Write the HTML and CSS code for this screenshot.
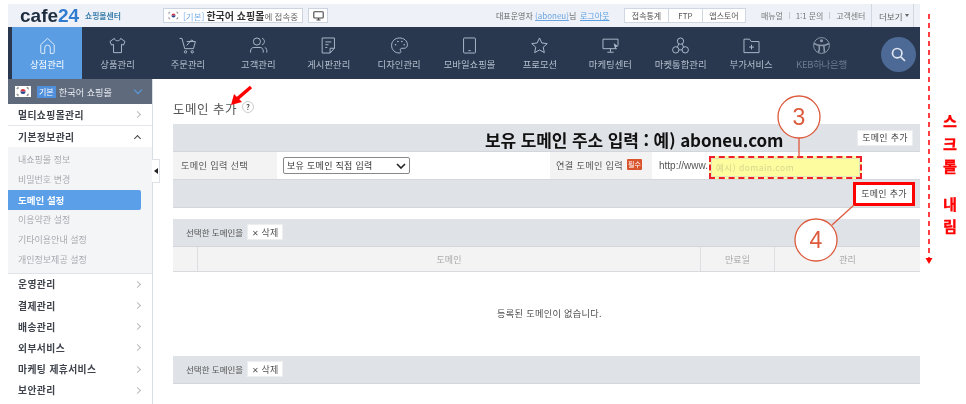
FILE: index.html
```html
<!DOCTYPE html>
<html lang="ko">
<head>
<meta charset="utf-8">
<title>도메인 설정</title>
<link rel="stylesheet" href="styles.css">
</head>
<body>
<svg width="0" height="0" class="defs">
  <symbol id="flag" viewBox="0 0 16 11">
    <rect width="16" height="11" fill="#fff"/>
    <path d="M5.500 5.500a2.500 2.500 0 0 1 5 0z" fill="#d3343f"/>
    <path d="M5.500 5.500a2.500 2.500 0 0 0 5 0z" fill="#28478f"/>
    <path d="M1.500 2.500l2-1.500M2 3.200l2-1.500M12 1l2 1.500M11.600 1.700l2 1.500M1.500 8.500l2 1.500M2 7.800l2 1.500M12 10l2-1.500M11.600 9.300l2-1.500" stroke="#222" stroke-width=".5"/>
  </symbol>
</svg>

<div class="app">
  <header class="topbar">
    <div class="logo"><span class="logo-word">cafe<b>24</b></span><span class="logo-sub">쇼핑몰센터</span></div>
    <div class="shop-state"><svg class="flag-sm"><use href="#flag"/></svg><span class="st-blue">[기본]</span><b>한국어 쇼핑몰</b><span>에 접속중</span></div>
    <button class="monitor-btn"><svg width="11" height="10" viewBox="0 0 11 10" fill="none" stroke="#444" stroke-width="1.100"><rect x=".8" y=".8" width="9.400" height="6.200" rx=".8"/><path d="M3.500 9h4M5.500 7v2"/></svg></button>
    <div class="top-right">
      <span class="owner">대표운영자 <a>(aboneu)</a>님</span>
      <a class="logout">로그아웃</a>
      <div class="btn-group"><span class="bg-1">접속통계</span><span class="bg-2">FTP</span><span class="bg-3">앱스토어</span></div>
      <nav class="links"><span>매뉴얼</span><i></i><span>1:1 문의</span><i></i><span>고객센터</span></nav>
      <div class="more">더보기 <em></em></div>
    </div>
  </header>

  <nav class="mainnav">
    <a class="nav-item active"><svg viewBox="0 0 24 24"><path d="M3.500 11L12 3l8.500 8v9.500a1.500 1.500 0 0 1-1.500 1.500h-3.500v-7a3.500 3.500 0 0 0-7 0v7H5a1.500 1.500 0 0 1-1.500-1.500z"/></svg><span>상점관리</span></a>
    <a class="nav-item"><svg viewBox="0 0 24 24"><path d="M8 3L2.500 7l2 4.500 2.500-1V21h10V10.500l2.500 1 2-4.500L16 3c-.5 2-2 3-4 3s-3.500-1-4-3z"/></svg><span>상품관리</span></a>
    <a class="nav-item"><svg viewBox="0 0 24 24"><path d="M2 3h3l3.500 13h11L22 7H11"/><path d="M11 12l6-7 3 2"/><circle cx="9.500" cy="20" r="1.500"/><circle cx="18" cy="20" r="1.500"/></svg><span>주문관리</span></a>
    <a class="nav-item"><svg viewBox="0 0 24 24"><circle cx="10" cy="7" r="4.500"/><path d="M2 21v-2c0-3 2-4.500 4-4.500h8c2 0 4 1.500 4 4.500v2"/><path d="M16.500 3c2 .5 3 2.200 3 4s-1 3.500-3 4M20 14.500c1.500.5 2.500 2 2.500 4V21"/></svg><span>고객관리</span></a>
    <a class="nav-item"><svg viewBox="0 0 24 24"><path d="M4 2.500h15.500v13L14 21.500H4z"/><path d="M14 21.500V15.500h5.500M8 7.500h7.500M8 11h4M8 14.500h2.500"/></svg><span>게시판관리</span></a>
    <a class="nav-item"><svg viewBox="0 0 24 24"><path d="M12 2.500C6 2.500 2 6.800 2 12c0 5.500 4.500 9.500 9.500 9.500 2.500 0 2.700-1.800 1.800-3-1-1.500 0-3 1.700-3H18c2.500 0 4-1.800 4-4.500 0-5-4.500-8.500-10-8.500z"/><circle cx="7" cy="11" r="1" class="dot"/><circle cx="10" cy="7" r="1" class="dot"/><circle cx="15" cy="7" r="1" class="dot"/><circle cx="18" cy="11" r="1" class="dot"/></svg><span>디자인관리</span></a>
    <a class="nav-item"><svg viewBox="0 0 24 24"><rect x="4.500" y="2.500" width="15" height="19" rx="1"/><path d="M10.500 18.500h3"/></svg><span>모바일쇼핑몰</span></a>
    <a class="nav-item"><svg viewBox="0 0 24 24"><path d="M12 2.500l2.900 6.300 6.900.8-5.100 4.600 1.400 6.800L12 17.600 5.900 21l1.400-6.800L2.200 9.600l6.900-.8z"/></svg><span>프로모션</span></a>
    <a class="nav-item"><svg viewBox="0 0 24 24"><path d="M20 16H2.500V4h19v8"/><path d="M8 20.500h8M12 16v4"/><path d="M16 9l6 4-3 1-1 3z" class="solid"/></svg><span>마케팅센터</span></a>
    <a class="nav-item"><svg viewBox="0 0 24 24"><circle cx="12" cy="6.500" r="4"/><circle cx="6" cy="17.500" r="4"/><circle cx="18" cy="17.500" r="4"/><path d="M10 10l-2 4M14 10l2 4M10 17.500h4"/></svg><span>마켓통합관리</span></a>
    <a class="nav-item"><svg viewBox="0 0 24 24"><path d="M2.500 4h7l2 3h10v14h-19z"/><path d="M12 11v6M9 14h6"/></svg><span>부가서비스</span></a>
    <a class="nav-item keb"><svg viewBox="0 0 24 24"><circle cx="12" cy="12" r="10"/><circle cx="12" cy="6" r="2" class="dot"/><path d="M2.500 9.500c3 2 6 2.500 9.500 2.500s6.500-.5 9.500-2.500" stroke-width="2"/><path d="M9 12c1 4 .5 6-1 9M15 12c0 3.500 1 6 .5 9" stroke-width="2"/></svg><span>KEB하나은행</span></a>
    <button class="search"><svg width="15" height="15" viewBox="0 0 15 15" fill="none" stroke="#dfe6f0" stroke-width="1.700"><circle cx="6.200" cy="6.200" r="4.700"/><path d="M9.800 9.800L14 14"/></svg></button>
  </nav>

  <div class="body-row">
    <aside class="sidebar">
      <div class="side-head"><svg class="flag-md"><use href="#flag"/></svg><span class="side-badge">기본</span><span class="side-shop">한국어 쇼핑몰</span><em class="side-chev"></em></div>
      <div class="side-row first">멀티쇼핑몰관리<em class="chev"></em></div>
      <div class="side-row open">기본정보관리<em class="chev up"></em></div>
      <ul class="submenu">
        <li>내쇼핑몰 정보</li>
        <li>비밀번호 변경</li>
        <li class="current">도메인 설정</li>
        <li>이용약관 설정</li>
        <li>기타이용안내 설정</li>
        <li>개인정보제공 설정</li>
      </ul>
      <div class="side-row">운영관리<em class="chev"></em></div>
      <div class="side-row">결제관리<em class="chev"></em></div>
      <div class="side-row">배송관리<em class="chev"></em></div>
      <div class="side-row">외부서비스<em class="chev"></em></div>
      <div class="side-row">마케팅 제휴서비스<em class="chev"></em></div>
      <div class="side-row">보안관리<em class="chev"></em></div>
      <div class="side-toggle"><em></em></div>
    </aside>

    <main class="content">
      <h1 class="title">도메인 추가 <span class="help">?</span></h1>

      <section class="panel">
        <div class="bar bar-end"><button class="btn">도메인 추가</button></div>
        <div class="form-row">
          <div class="th th-a">도메인 입력 선택</div>
          <div class="td td-a"><div class="fake-select">보유 도메인 직접 입력<svg width="10" height="6" viewBox="0 0 10 6" fill="none" stroke="#222" stroke-width="1.600"><path d="M1 1l4 4 4-4"/></svg></div></div>
          <div class="th th-b">연결 도메인 입력<span class="req">필수</span></div>
          <div class="td td-b"><span class="prefix">http://www.</span><div class="domain-input">예시) domain.com</div></div>
        </div>
        <div class="bar bar-end bar-foot"><button class="btn btn-hl">도메인 추가</button></div>
      </section>

      <section class="panel panel-list">
        <div class="bar bar-action">선택한 도메인을<button class="btn btn-del"><span>✕</span> 삭제</button></div>
        <div class="thead"><div></div><div>도메인</div><div>만료일</div><div>관리</div></div>
        <div class="empty">등록된 도메인이 없습니다.</div>
        <div class="bar bar-action">선택한 도메인을<button class="btn btn-del"><span>✕</span> 삭제</button></div>
      </section>
    </main>
  </div>
</div>

<!-- annotations laid over the screenshot -->
<div class="note-heading">보유 도메인 주소 입력 : 예) aboneu.com</div>
<svg class="overlay" width="966" height="404" viewBox="0 0 966 404" fill="none">
  <path d="M251 87L237 99" stroke="#f00" stroke-width="3.500"/>
  <path d="M231 105l3-11 8 8z" fill="#f00"/>
  <path d="M799 138v19" stroke="#dd5a3c" stroke-width="1.300"/>
  <path d="M854 205l-22 20" stroke="#dd5a3c" stroke-width="1.300"/>
  <circle cx="799" cy="117" r="21" fill="#fff" stroke="#dd5a3c" stroke-width="1.300"/>
  <circle cx="816" cy="240" r="21" fill="#fff" stroke="#dd5a3c" stroke-width="1.300"/>
  <path d="M929 14V258" stroke="#f00" stroke-width="1.500" stroke-dasharray="5 4"/>
  <path d="M925.500 258h7l-3.500 6z" fill="#f00"/>
</svg>
<div class="num num-3">3</div>
<div class="num num-4">4</div>
<div class="scroll-note"><span>스</span><span>크</span><span>롤</span><span class="gap">내</span><span>림</span></div>
</body>
</html>
```
FILE: styles.css
```css
* { box-sizing: border-box; }
html, body { margin: 0; height: 404px; overflow: hidden; background: #fff; }
body { position: relative; font-family: "Noto Sans CJK KR", "Noto Sans", sans-serif; font-size: 9px; color: #555; filter: blur(.35px); }
.defs { position: absolute; }
em { font-style: normal; display: block; }
a { color: inherit; }
button { font-family: inherit; padding: 0; }

.app { margin: 4px 46px 0 8px; height: 400px; display: flex; flex-direction: column; }

/* top bar */
.topbar { height: 23px; background: #eef2f8; display: flex; align-items: center; flex: none; }
.logo { width: 155px; flex: none; display: flex; align-items: center; padding-left: 12px; }
.logo-word { font-family: "Liberation Sans", sans-serif; font-weight: 700; font-size: 19px; line-height: 16px; color: #1d2c3f; width: 65px; flex: none; }
.logo-word b { color: #2f7cd0; }
.logo-sub { font-size: 7.800px; font-weight: 700; color: #3d7fae; white-space: nowrap; }
.shop-state { width: 140px; flex: none; height: 15px; background: #fff; border: 1px solid #ccd4df; display: flex; align-items: center; padding-left: 3px; font-size: 8.500px; color: #666; white-space: nowrap; }
.shop-state b { color: #333; font-size: 10px; margin-left: 2px; }
.st-blue { color: #79aee6; }
.flag-sm { width: 13px; height: 9px; margin-right: 3px; flex: none; }
.monitor-btn { width: 20px; flex: none; height: 15px; margin-left: 5px; background: #fff; border: 1px solid #ccd4df; display: flex; align-items: center; justify-content: center; }
.top-right { flex: 1; min-width: 0; display: flex; align-items: center; height: 100%; padding-left: 168px; }
.owner { width: 84px; flex: none; font-size: 8px; color: #666; white-space: nowrap; }
.owner a { color: #6aa4e0; text-decoration: underline; }
.logout { width: 44px; flex: none; color: #5b9fe3; text-decoration: underline; font-size: 8px; }
.btn-group { display: flex; flex: none; height: 15px; background: #fff; border: 1px solid #cfd7e2; font-size: 8px; color: #555; }
.btn-group span { display: flex; align-items: center; justify-content: center; border-left: 1px solid #cfd7e2; }
.btn-group .bg-1 { width: 43px; border-left: 0; }
.btn-group .bg-2 { width: 34px; }
.btn-group .bg-3 { width: 43px; }
.links { display: flex; flex: none; align-items: center; margin-left: 15px; gap: 6px; font-size: 8px; letter-spacing: -.1px; color: #777; width: 110px; white-space: nowrap; }
.links i { width: 1px; height: 7px; background: #c5ccd6; }
.more { height: 100%; flex: none; border-left: 1px solid #d2d8e1; border-right: 1px solid #d2d8e1; width: 43px; display: flex; align-items: center; gap: 3px; padding-left: 7px; font-size: 8.500px; color: #666; white-space: nowrap; }
.more em { border: 2.500px solid transparent; border-top: 3px solid #666; border-bottom: 0; }

/* nav */
.mainnav { height: 52px; flex: none; background: #29384f; padding-left: 4px; display: flex; position: relative; }
.nav-item { width: 70.400px; flex: none; display: flex; flex-direction: column; align-items: center; padding-top: 9px; color: #b4bfce; font-size: 9.400px; white-space: nowrap; }
.nav-item svg { width: 19px; height: 19px; fill: none; stroke: #b0bccd; stroke-width: 1.200; margin-bottom: 2px; }
.nav-item span { line-height: 14px; }
.nav-item .dot, .nav-item .solid { fill: #b0bccd; stroke: none; }
.nav-item.active { background: #5a9de3; color: #fff; }
.nav-item.active svg { stroke: #e4effb; }
.nav-item.keb { color: #6d7a8e; letter-spacing: -.3px; font-size: 9.500px; }
.nav-item.keb svg { stroke: #8d98a9; }
.nav-item.keb .dot { fill: #8d98a9; }
.search { position: absolute; left: 873px; top: 10px; width: 35px; height: 35px; border-radius: 50%; border: 0; background: #4d6a97; display: flex; align-items: center; justify-content: center; }

/* sidebar */
.body-row { flex: 1; display: flex; min-height: 0; }
.sidebar { width: 145px; flex: none; border-right: 1px solid #d8dce3; position: relative; background: #fff; }
.side-head { height: 25px; background: #5f6a7c; display: flex; align-items: center; padding-left: 7px; color: #e9ecf1; font-size: 9.200px; }
.flag-md { width: 16px; height: 11px; flex: none; }
.side-badge { background: #4f8fdc; color: #fff; padding: 0 2px; margin: 0 3px 0 6px; font-size: 8px; line-height: 12px; }
.side-shop { flex: 1; }
.side-chev { width: 6px; height: 6px; border-right: 1.500px solid #5aa0e6; border-bottom: 1.500px solid #5aa0e6; transform: rotate(45deg); margin: -3px 11px 0 0; }
.side-row { height: 21.200px; display: flex; align-items: center; justify-content: space-between; padding: 0 12px 0 10px; font-size: 9.800px; font-weight: 700; color: #3f444c; letter-spacing: .4px; }
.side-row.first { height: 22px; border-bottom: 1px solid #e3e6ea; }
.side-row.open { color: #3f444c; }
.chev { width: 5px; height: 5px; border-top: 1px solid #bbb; border-right: 1px solid #bbb; transform: rotate(45deg); }
.chev.up { border-color: #444; transform: rotate(-45deg); margin-top: 3px; border-width: 1.500px; }
.submenu { margin: -.4px 0 0; padding: 3px 11px 3px 0; list-style: none; background: #f4f5f7; border-bottom: 1px solid #e0e3e8; height: 127px; }
.submenu li { height: 20px; display: flex; align-items: center; padding-left: 10px; font-size: 9px; color: #a8abb0; }
.submenu .current { background: #5a9fe8; color: #fff; font-weight: 700; border-radius: 0 2px 2px 0; font-size: 9.500px; }
.side-toggle { position: absolute; left: 144px; top: 80px; width: 8px; height: 24px; background: #fff; border: 1px solid #dde0e5; border-left: 0; display: flex; align-items: center; justify-content: center; }
.side-toggle em { border: 3px solid transparent; border-right: 4px solid #222; border-left: 0; }

/* content */
.content { flex: 1; min-width: 0; padding: 21px 0 0 20px; }
.title { margin: 0; height: 24px; font-size: 12.500px; font-weight: 400; color: #555; letter-spacing: .5px; line-height: 18px; white-space: nowrap; }
.help { display: inline-block; width: 12px; height: 12px; border: 1px solid #ccc; border-radius: 50%; font-size: 7.500px; line-height: 10px; text-align: center; vertical-align: 4px; font-weight: 700; margin-left: 1px; letter-spacing: 0; }
.panel { background: #fff; }
.panel-list { margin-top: 11px; }
.bar { height: 28px; background: #dfe2e6; display: flex; align-items: center; border-bottom: 1px solid #d3d6db; }
.bar-end { justify-content: flex-end; padding-right: 7px; }
.bar-foot { padding-right: 5px; }
.btn { height: 16px; width: 56px; border: 1px solid #eceef0; background: #fff; font-size: 9px; color: #444; letter-spacing: .3px; white-space: nowrap; }
.btn-hl { width: 62px; height: 24px; border: 3px solid #f00; }
.bar-action { padding-left: 13px; padding-bottom: 1px; font-size: 8.500px; color: #555; gap: 4px; }
.btn-del { width: 36px; color: #555; letter-spacing: 0; }
.btn-del span { font-size: 7.500px; }

.form-row { height: 28px; display: flex; border-bottom: 1px solid #d3d6db; }
.th { background: #f3f3f3; display: flex; align-items: center; font-size: 9.200px; color: #555; letter-spacing: .3px; padding-bottom: 2px; white-space: nowrap; }
.th-a { width: 104px; padding-left: 8px; }
.th-b { width: 102px; padding-left: 6px; }
.td { display: flex; align-items: center; }
.td-a { width: 273px; padding-left: 6px; }
.td-b { flex: 1; padding-left: 7px; }
.prefix { width: 50px; flex: none; font-family: "Liberation Sans", sans-serif; font-size: 10px; color: #555; white-space: nowrap; }
.fake-select { width: 127px; height: 17px; border: 1px solid #888; border-radius: 2px; background: #fff; display: flex; align-items: center; justify-content: space-between; padding: 0 3px; font-size: 9px; color: #333; letter-spacing: .3px; }
.req { background: #d9532c; color: #fff; font-size: 7px; line-height: 11px; padding: 0 1px; margin-left: 4px; border-radius: 1px; letter-spacing: 0; }
.domain-input { width: 153px; height: 23px; flex: none; margin-top: 3px; background: #fdfd9f; border: 2px dashed #f0202a; box-shadow: inset 0 0 0 1px #e3e3c0; display: flex; align-items: center; padding-left: 5px; font-size: 8.500px; color: #d5d58e; letter-spacing: .5px; white-space: nowrap; }

.thead { display: grid; grid-template-columns: 24px 503px 74px 1fr; height: 25px; background: #f3f3f3; border-bottom: 1px solid #d8dade; }
.thead div { display: flex; align-items: center; justify-content: center; border-left: 1px solid #dcdee2; font-size: 9px; color: #aaa; }
.thead div:first-child { border-left: 0; }
.empty { height: 84px; display: flex; align-items: center; justify-content: center; font-size: 9.200px; color: #4c4c4c; letter-spacing: .3px; padding: 0 0 2px 6px; }

/* annotations */
.note-heading { position: absolute; left: 485px; top: 127px; font-size: 17px; line-height: 26px; font-weight: 700; color: #111; white-space: nowrap; letter-spacing: -.1px; }
.overlay { position: absolute; left: 0; top: 0; pointer-events: none; }
.num { position: absolute; width: 42px; text-align: center; font-family: "Liberation Sans", sans-serif; font-size: 23px; line-height: 24px; color: #dd5a3c; }
.num-3 { left: 778px; top: 105px; }
.num-4 { left: 795px; top: 228px; }
.scroll-note { position: absolute; left: 941px; top: 109px; width: 18px; display: flex; flex-direction: column; align-items: center; font-size: 15.200px; line-height: 22.500px; font-weight: 700; color: #f00; -webkit-text-stroke: .3px #f00; }
.scroll-note .gap { margin-top: 15px; }
```
